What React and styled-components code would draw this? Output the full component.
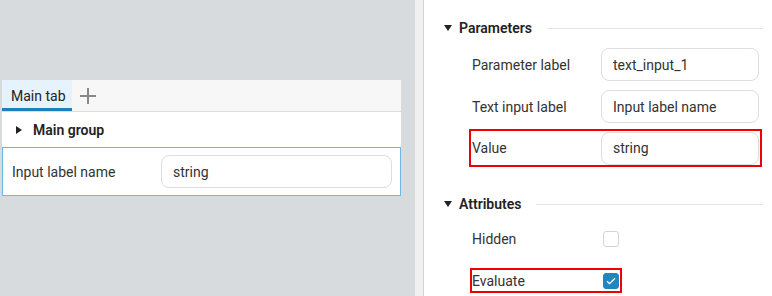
import React from "react";
import styled, { createGlobalStyle } from "styled-components";

const Global = createGlobalStyle`
  html, body { margin: 0; padding: 0; }
  body {
    width: 772px; height: 296px; overflow: hidden;
    font-family: Roboto, "Liberation Sans", sans-serif;
    font-size: 14px; color: #333;
  }
`;

const Page = styled.div`
  display: flex;
  width: 772px;
  height: 296px;
`;

const Canvas = styled.div`
  width: 413px;
  background: #d7dbde;
  padding: 80px 0 0 2px;
`;

const Splitter = styled.div`
  width: 8px;
  background: #f0f0f0;
  border-right: 1px solid #d2d2d2;
`;

const Inspector = styled.div`
  flex: 1;
  background: #fff;
  padding: 18px 9px 0 20px;
  display: flex;
  flex-direction: column;
`;

const Card = styled.div`
  width: 399px;
  background: #fff;
`;

const TabBar = styled.div`
  display: flex;
  align-items: stretch;
  height: 31px;
  background: #f7f7f7;
  border-bottom: 1px solid #dcdcdc;
`;

const Tab = styled.div`
  width: 70px;
  box-sizing: border-box;
  padding: 3px 0 0 9px;
  display: flex;
  align-items: center;
  background: ${(p) => (p.$active ? "#e7f3fc" : "transparent")};
  border-bottom: 3px solid ${(p) => (p.$active ? "#1f7fbf" : "transparent")};
  color: #222;
`;

const AddTab = styled.div`
  width: 32px;
  display: flex;
  align-items: center;
  justify-content: center;
`;

const GroupHeader = styled.div`
  height: 35px;
  display: flex;
  align-items: center;
  padding: 1px 0 0 14px;
  box-sizing: border-box;
  gap: 11px;
  font-weight: 600;
  color: #222;
`;

const TriRight = styled.span`
  width: 0; height: 0;
  border-top: 4px solid transparent;
  border-bottom: 4px solid transparent;
  border-left: 6px solid #222;
`;

const TriDown = styled.span`
  width: 0; height: 0;
  border-left: 4.5px solid transparent;
  border-right: 4.5px solid transparent;
  border-top: 6px solid #222;
`;

const PreviewRow = styled.div`
  height: 47px;
  border: 1px solid #6cb9e6;
  display: flex;
  align-items: center;
  padding: 0 8px 0 9px;
`;

const PreviewLabel = styled.div`
  width: 149px;
  color: #333;
`;

const Field = styled.div`
  flex: 1;
  height: 33px;
  box-sizing: border-box;
  border: 1px solid #dedede;
  border-radius: 8px;
  display: flex;
  align-items: center;
  padding: 0 11px;
  color: #333;
`;

const SectionHead = styled.div`
  height: 20px;
  display: flex;
  align-items: center;
  gap: 7px;
  font-weight: 600;
  color: #222;
  margin-top: ${(p) => p.$mt || 0}px;
`;

const Rule = styled.div`
  flex: 1;
  height: 1px;
  background: #e4e4e4;
  margin-left: 8px;
`;

const Rows = styled.div`
  display: flex;
  flex-direction: column;
  gap: ${(p) => p.$gap}px;
  padding-left: 28px;
  margin-top: ${(p) => p.$mt}px;
`;

const Row = styled.div`
  display: flex;
  align-items: center;
  width: ${(p) => p.$w || 287}px;
  height: ${(p) => p.$h || 33}px;
  outline: ${(p) => (p.$flag ? "2px solid #ee0000" : "none")};
  outline-offset: ${(p) => p.$off ?? 1}px;
`;

const Label = styled.div`
  width: 129px;
  flex: none;
  color: #333;
`;

const Check = styled.div`
  width: 16px;
  height: 16px;
  margin-left: 2px;
  box-sizing: border-box;
  border-radius: 3px;
  border: 1px solid ${(p) => (p.$on ? "#1f86c0" : "#d4d4d4")};
  background: ${(p) => (p.$on ? "#1f86c0" : "#fff")};
  display: flex;
  align-items: center;
  justify-content: center;
`;

function Plus() {
  return (
    <svg width="18" height="18" viewBox="0 0 18 18">
      <path d="M9 1v16M1 9h16" stroke="#888" strokeWidth="2" fill="none" />
    </svg>
  );
}

function Tick() {
  return (
    <svg width="10" height="8" viewBox="0 0 10 8">
      <path d="M1 4.2l2.6 2.4L9 1.2" stroke="#fff" strokeWidth="1.3" fill="none" />
    </svg>
  );
}

export default function App() {
  return (
    <>
      <Global />
      <Page>
        <Canvas>
          <Card>
            <TabBar>
              <Tab $active>Main tab</Tab>
              <AddTab>
                <Plus />
              </AddTab>
            </TabBar>
            <GroupHeader>
              <TriRight />
              Main group
            </GroupHeader>
            <PreviewRow>
              <PreviewLabel>Input label name</PreviewLabel>
              <Field>string</Field>
            </PreviewRow>
          </Card>
        </Canvas>
        <Splitter />
        <Inspector>
          <SectionHead>
            <TriDown />
            Parameters
            <Rule />
          </SectionHead>
          <Rows $gap={9} $mt={10}>
            <Row>
              <Label>Parameter label</Label>
              <Field>text_input_1</Field>
            </Row>
            <Row>
              <Label>Text input label</Label>
              <Field>Input label name</Field>
            </Row>
            <Row $flag $h={32}>
              <Label>Value</Label>
              <Field>string</Field>
            </Row>
          </Rows>
          <SectionHead $mt={30}>
            <TriDown />
            Attributes
            <Rule />
          </SectionHead>
          <Rows $gap={20} $mt={14}>
            <Row $h={22}>
              <Label>Hidden</Label>
              <Check />
            </Row>
            <Row $h={21} $w={148} $flag $off={0}>
              <Label>Evaluate</Label>
              <Check $on>
                <Tick />
              </Check>
            </Row>
          </Rows>
        </Inspector>
      </Page>
    </>
  );
}
